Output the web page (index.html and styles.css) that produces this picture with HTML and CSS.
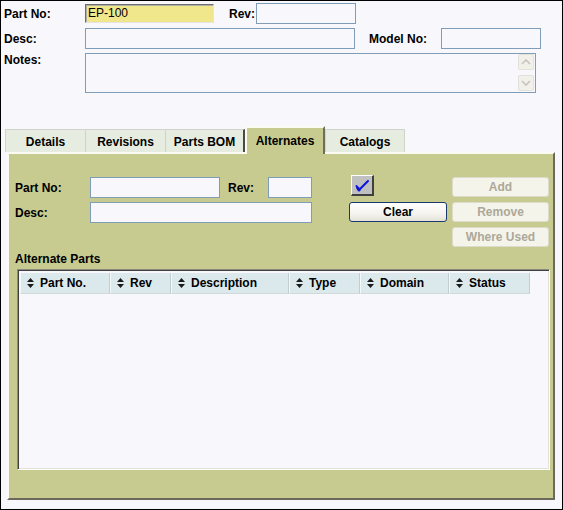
FILE: index.html
```html
<!DOCTYPE html>
<html>
<head>
<meta charset="utf-8">
<title>Part</title>
<link rel="stylesheet" href="styles.css">
</head>
<body>
<div class="frame">
  <div class="head">
    <div class="row">
      <span class="lbl lbl-main">Part No:</span>
      <div class="field field-key">EP-100</div>
      <span class="lbl lbl-rev">Rev:</span>
      <div class="field field-rev"></div>
    </div>
    <div class="row row-gap">
      <span class="lbl lbl-main">Desc:</span>
      <div class="field field-desc"></div>
      <span class="lbl lbl-model">Model No:</span>
      <div class="field field-model"></div>
    </div>
    <div class="row row-gap row-notes">
      <span class="lbl lbl-main lbl-top">Notes:</span>
      <div class="field notes">
        <div class="scroll">
          <div class="sbtn"><svg width="10" height="6" viewBox="0 0 10 6"><path d="M1 5 L5 1 L9 5" fill="none" stroke="#c4c4bc" stroke-width="1.6"/></svg></div>
          <div class="sbtn"><svg width="10" height="6" viewBox="0 0 10 6"><path d="M1 1 L5 5 L9 1" fill="none" stroke="#c4c4bc" stroke-width="1.6"/></svg></div>
        </div>
      </div>
    </div>
  </div>

  <div class="tabs">
    <div class="tab">Details</div>
    <div class="tab">Revisions</div>
    <div class="tab tab-before">Parts BOM</div>
    <div class="tab tab-active">Alternates</div>
    <div class="tab tab-last">Catalogs</div>
  </div>

  <div class="panel">
    <div class="search">
      <div class="sform">
        <div class="srow">
          <span class="lbl slbl">Part No:</span>
          <div class="field f-part"></div>
          <span class="lbl slbl-rev">Rev:</span>
          <div class="field f-rev"></div>
        </div>
        <div class="srow srow-gap">
          <span class="lbl slbl">Desc:</span>
          <div class="field f-desc"></div>
        </div>
      </div>
      <div class="mid">
        <button class="btn-check"><svg width="16" height="14" viewBox="0 0 16 14"><path d="M2.5 8 L5 12 L14 3" fill="none" stroke="#0a14d8" stroke-width="2" stroke-linejoin="round" stroke-linecap="round"/><path d="M3.8 10 L5 12" stroke="#0a14d8" stroke-width="3" stroke-linecap="round"/></svg></button>
        <button class="btn-clear">Clear</button>
      </div>
      <div class="actions">
        <button class="btn-dis">Add</button>
        <button class="btn-dis">Remove</button>
        <button class="btn-dis">Where Used</button>
      </div>
    </div>

    <div class="section-title">Alternate Parts</div>

    <div class="grid-box">
      <div class="grid-head">
        <div class="col c1"><svg class="sort" width="7" height="10" viewBox="0 0 7 10"><path d="M0 4 L3.5 0 L7 4 Z M0 6 L7 6 L3.5 10 Z" fill="#1a1a1a"/></svg>Part No.</div>
        <div class="col c2"><svg class="sort" width="7" height="10" viewBox="0 0 7 10"><path d="M0 4 L3.5 0 L7 4 Z M0 6 L7 6 L3.5 10 Z" fill="#1a1a1a"/></svg>Rev</div>
        <div class="col c3"><svg class="sort" width="7" height="10" viewBox="0 0 7 10"><path d="M0 4 L3.5 0 L7 4 Z M0 6 L7 6 L3.5 10 Z" fill="#1a1a1a"/></svg>Description</div>
        <div class="col c4"><svg class="sort" width="7" height="10" viewBox="0 0 7 10"><path d="M0 4 L3.5 0 L7 4 Z M0 6 L7 6 L3.5 10 Z" fill="#1a1a1a"/></svg>Type</div>
        <div class="col c5"><svg class="sort" width="7" height="10" viewBox="0 0 7 10"><path d="M0 4 L3.5 0 L7 4 Z M0 6 L7 6 L3.5 10 Z" fill="#1a1a1a"/></svg>Domain</div>
        <div class="col c6"><svg class="sort" width="7" height="10" viewBox="0 0 7 10"><path d="M0 4 L3.5 0 L7 4 Z M0 6 L7 6 L3.5 10 Z" fill="#1a1a1a"/></svg>Status</div>
      </div>
    </div>
  </div>
</div>
</body>
</html>
```

FILE: styles.css
```css
* { box-sizing: border-box; }

html, body {
  margin: 0;
  padding: 0;
  background: #f8f8fc;
}

body {
  font-family: "Liberation Sans", Arial, sans-serif;
  font-size: 12px;
  color: #000;
}

.frame {
  width: 563px;
  height: 510px;
  border: 1px solid #000;
  background: #f8f8fc;
  overflow: hidden;
}

.head {
  padding: 2px 0 0 3px;
}

.row {
  display: flex;
  align-items: center;
  height: 21px;
}

.row-gap { margin-top: 4px; }

.row-notes {
  height: 40px;
  align-items: flex-start;
}

.lbl {
  font-weight: bold;
  line-height: 14px;
  white-space: nowrap;
}

.lbl-main { width: 81px; }
.lbl-top { margin-top: 0; }

.lbl-rev {
  margin-left: 15px;
  width: 27px;
}

.lbl-model {
  margin-left: 14px;
  width: 72px;
}

.field {
  height: 21px;
  border: 1px solid #7f9db9;
  background: #f8f8fc;
}

.field-key {
  width: 129px;
  height: 19px;
  background: #f0e68c;
  border-color: #6e6e6e #e4e4e4 #e4e4e4 #6e6e6e;
  box-shadow: inset 1px 1px 0 #b0b0a0;
  padding-left: 2px;
  line-height: 17px;
  font-size: 12px;
}

.field-rev { width: 100px; }
.field-desc { width: 270px; }
.field-model { width: 100px; }

.notes {
  width: 451px;
  height: 40px;
  display: flex;
  justify-content: flex-end;
}

.scroll {
  width: 17px;
  display: flex;
  flex-direction: column;
  justify-content: space-between;
  padding: 0 1px 1px 0;
}

.sbtn {
  width: 16px;
  height: 16px;
  background: #f1f1ea;
  border: 1px solid #e2e2da;
  border-radius: 2px;
  display: flex;
  align-items: center;
  justify-content: center;
}

/* tabs */
.tabs {
  margin: 33px 0 0 4px;
  height: 26px;
  display: flex;
  align-items: flex-end;
  position: relative;
  z-index: 2;
}

.tab {
  width: 80px;
  height: 23px;
  background: #e6ecdf;
  border-top: 1px solid #cfd3cb;
  border-left: 1px solid #cfd3cb;
  display: flex;
  align-items: center;
  justify-content: center;
  font-weight: bold;
  padding-top: 1px;
}

.tab-before {
  border-right: 2px solid #4a4a44;
}

.tab-last {
  border-right: 1px solid #cfd3cb;
}

.tab-active {
  height: 28px;
  margin-bottom: -2px;
  background: #c7cb90;
  border-top: 2px solid #fbfbf4;
  border-left: 2px solid #fbfbf4;
  border-right: 2px solid #6e6d60;
  padding-top: 1px;
  padding-bottom: 2px;
}

/* panel */
.panel {
  margin-left: 6px;
  width: 548px;
  height: 348px;
  background: #c7cb90;
  border-style: solid;
  border-width: 2px;
  border-color: #fbfbf4 #6a695c #6a695c #fbfbf4;
  padding: 21px 0 0 6px;
  position: relative;
  z-index: 1;
}

.search {
  display: flex;
  align-items: flex-start;
}

.sform { margin-top: 2px; }

.srow {
  display: flex;
  align-items: center;
  height: 21px;
}

.srow-gap { margin-top: 4px; }

.slbl { width: 75px; }

.slbl-rev {
  margin-left: 8px;
  width: 40px;
}

.f-part { width: 130px; }
.f-rev { width: 44px; }
.f-desc { width: 222px; }

.mid {
  margin-left: 37px;
  width: 98px;
  display: flex;
  flex-direction: column;
  align-items: flex-start;
}

button {
  font-family: "Liberation Sans", Arial, sans-serif;
  font-size: 12px;
  font-weight: bold;
  padding: 0;
  margin: 0;
}

.btn-check {
  margin-left: 2px;
  width: 23px;
  height: 21px;
  background: #c0c0c0;
  border-style: solid;
  border-width: 1px 2px 2px 1px;
  border-color: #ffffff #404040 #404040 #ffffff;
  display: flex;
  align-items: center;
  justify-content: center;
}

.btn-clear {
  margin-top: 6px;
  width: 98px;
  height: 20px;
  border: 1px solid #1a3a6e;
  border-radius: 3px;
  background: linear-gradient(#ffffff, #f4f3ee 60%, #e4e2d8);
  color: #000;
  line-height: 18px;
}

.actions {
  margin-left: 5px;
  margin-top: 2px;
  width: 97px;
  display: flex;
  flex-direction: column;
  gap: 5px;
}

.btn-dis {
  width: 97px;
  height: 20px;
  background: #f5f4ea;
  border: 1px solid #dcdbcc;
  border-radius: 3px;
  color: #aca899;
  line-height: 18px;
}

.section-title {
  margin-top: 5px;
  font-weight: bold;
  line-height: 14px;
}

.grid-box {
  margin: 3px 0 0 2px;
  width: 533px;
  height: 201px;
  background: #f8f8fc;
  border-style: solid;
  border-width: 1px;
  border-color: #8a8a80 #ffffff #ffffff #8a8a80;
  box-shadow: inset 1px 1px 0 #404040, inset -1px -1px 0 #e2e2da;
  padding: 3px 2px 2px 2px;
}

.grid-head {
  display: flex;
  height: 21px;
}

.col {
  height: 21px;
  background: #dce9ec;
  border-left: 1px solid #f2f7f8;
  border-right: 1px solid #c2cdcd;
  border-bottom: 1px solid #d0dada;
  display: flex;
  align-items: center;
  padding-left: 6px;
  font-weight: bold;
  white-space: nowrap;
}

.sort {
  margin-right: 6px;
  flex: none;
}

.c1 { width: 90px; }
.c2 { width: 61px; }
.c3 { width: 118px; }
.c4 { width: 71px; }
.c5 { width: 89px; }
.c6 { width: 81px; }
```
